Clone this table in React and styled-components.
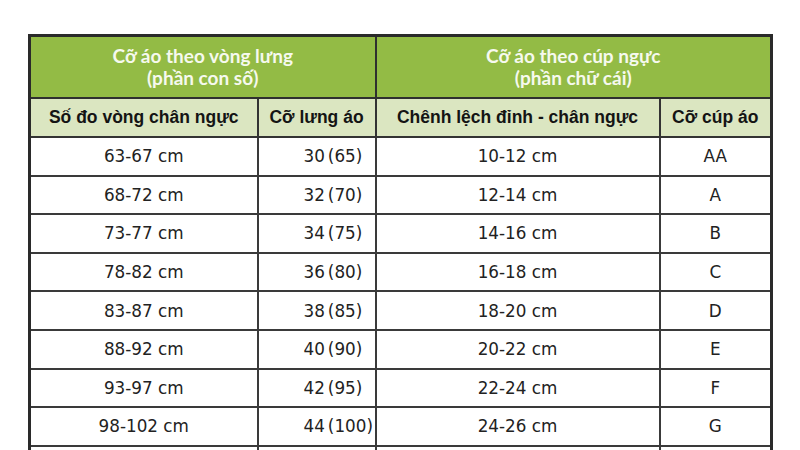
import React from "react";
import styled, { createGlobalStyle } from "styled-components";

const Global = createGlobalStyle`
  html, body { margin: 0; padding: 0; background: #ffffff; }
  body { width: 800px; height: 450px; overflow: hidden; }
`;

const Page = styled.div`
  width: 800px;
  height: 450px;
  overflow: hidden;
  padding: 34px 0 0 28px;
  box-sizing: border-box;
  background: #fff;
`;

const Table = styled.table`
  border-collapse: collapse;
  table-layout: fixed;
  width: 742px;
  border: 3px solid #2a2a2a;
  font-family: "Liberation Sans", Arial, sans-serif;
`;

const GroupHead = styled.th`
  background: #93bb45;
  color: #f6f9ee;
  font-family: Lato, "Open Sans", sans-serif;
  font-weight: 700;
  font-size: 19px;
  line-height: 22px;
  height: 60px;
  padding: 0;
  text-align: center;
  border: 2px solid #2f2f2f;
`;

const SubHead = styled.th`
  background: #dbe6c1;
  color: #141414;
  font-weight: 700;
  font-size: 17.5px;
  height: 37px;
  padding: 0;
  text-align: center;
  white-space: nowrap;
  border: 2px solid #333;
`;

const Cell = styled.td`
  color: #222222;
  font-family: "DejaVu Sans", Verdana, sans-serif;
  font-size: 16.8px;
  height: 36.6px;
  padding: 0 0 0 ${(p) => (p.$left ? "45px" : "0")};
  text-align: ${(p) => (p.$left ? "left" : "center")};
  white-space: nowrap;
  overflow: visible;
  border: 2px solid #3a3a3a;
`;

const Paren = styled.span`
  margin-left: 3px;
`;

const rows = [
  ["63-67 cm", "30", "(65)", "10-12 cm", "AA"],
  ["68-72 cm", "32", "(70)", "12-14 cm", "A"],
  ["73-77 cm", "34", "(75)", "14-16 cm", "B"],
  ["78-82 cm", "36", "(80)", "16-18 cm", "C"],
  ["83-87 cm", "38", "(85)", "18-20 cm", "D"],
  ["88-92 cm", "40", "(90)", "20-22 cm", "E"],
  ["93-97 cm", "42", "(95)", "22-24 cm", "F"],
  ["98-102 cm", "44", "(100)", "24-26 cm", "G"],
  ["", "", "", "", ""],
];

export default function App() {
  return (
    <>
      <Global />
      <Page>
        <Table>
          <colgroup>
            <col style={{ width: 228 }} />
            <col style={{ width: 118 }} />
            <col style={{ width: 284 }} />
            <col style={{ width: 112 }} />
          </colgroup>
          <thead>
            <tr>
              <GroupHead colSpan={2}>
                Cỡ áo theo vòng lưng
                <br />
                (phần con số)
              </GroupHead>
              <GroupHead colSpan={2}>
                Cỡ áo theo cúp ngực
                <br />
                (phần chữ cái)
              </GroupHead>
            </tr>
            <tr>
              <SubHead>Số đo vòng chân ngực</SubHead>
              <SubHead>Cỡ lưng áo</SubHead>
              <SubHead>Chênh lệch đỉnh - chân ngực</SubHead>
              <SubHead>Cỡ cúp áo</SubHead>
            </tr>
          </thead>
          <tbody>
            {rows.map((r, i) => (
              <tr key={i}>
                <Cell>{r[0]}</Cell>
                <Cell $left>
                  {r[1]}
                  {r[2] && <Paren>{r[2]}</Paren>}
                </Cell>
                <Cell>{r[3]}</Cell>
                <Cell>{r[4]}</Cell>
              </tr>
            ))}
          </tbody>
        </Table>
      </Page>
    </>
  );
}
